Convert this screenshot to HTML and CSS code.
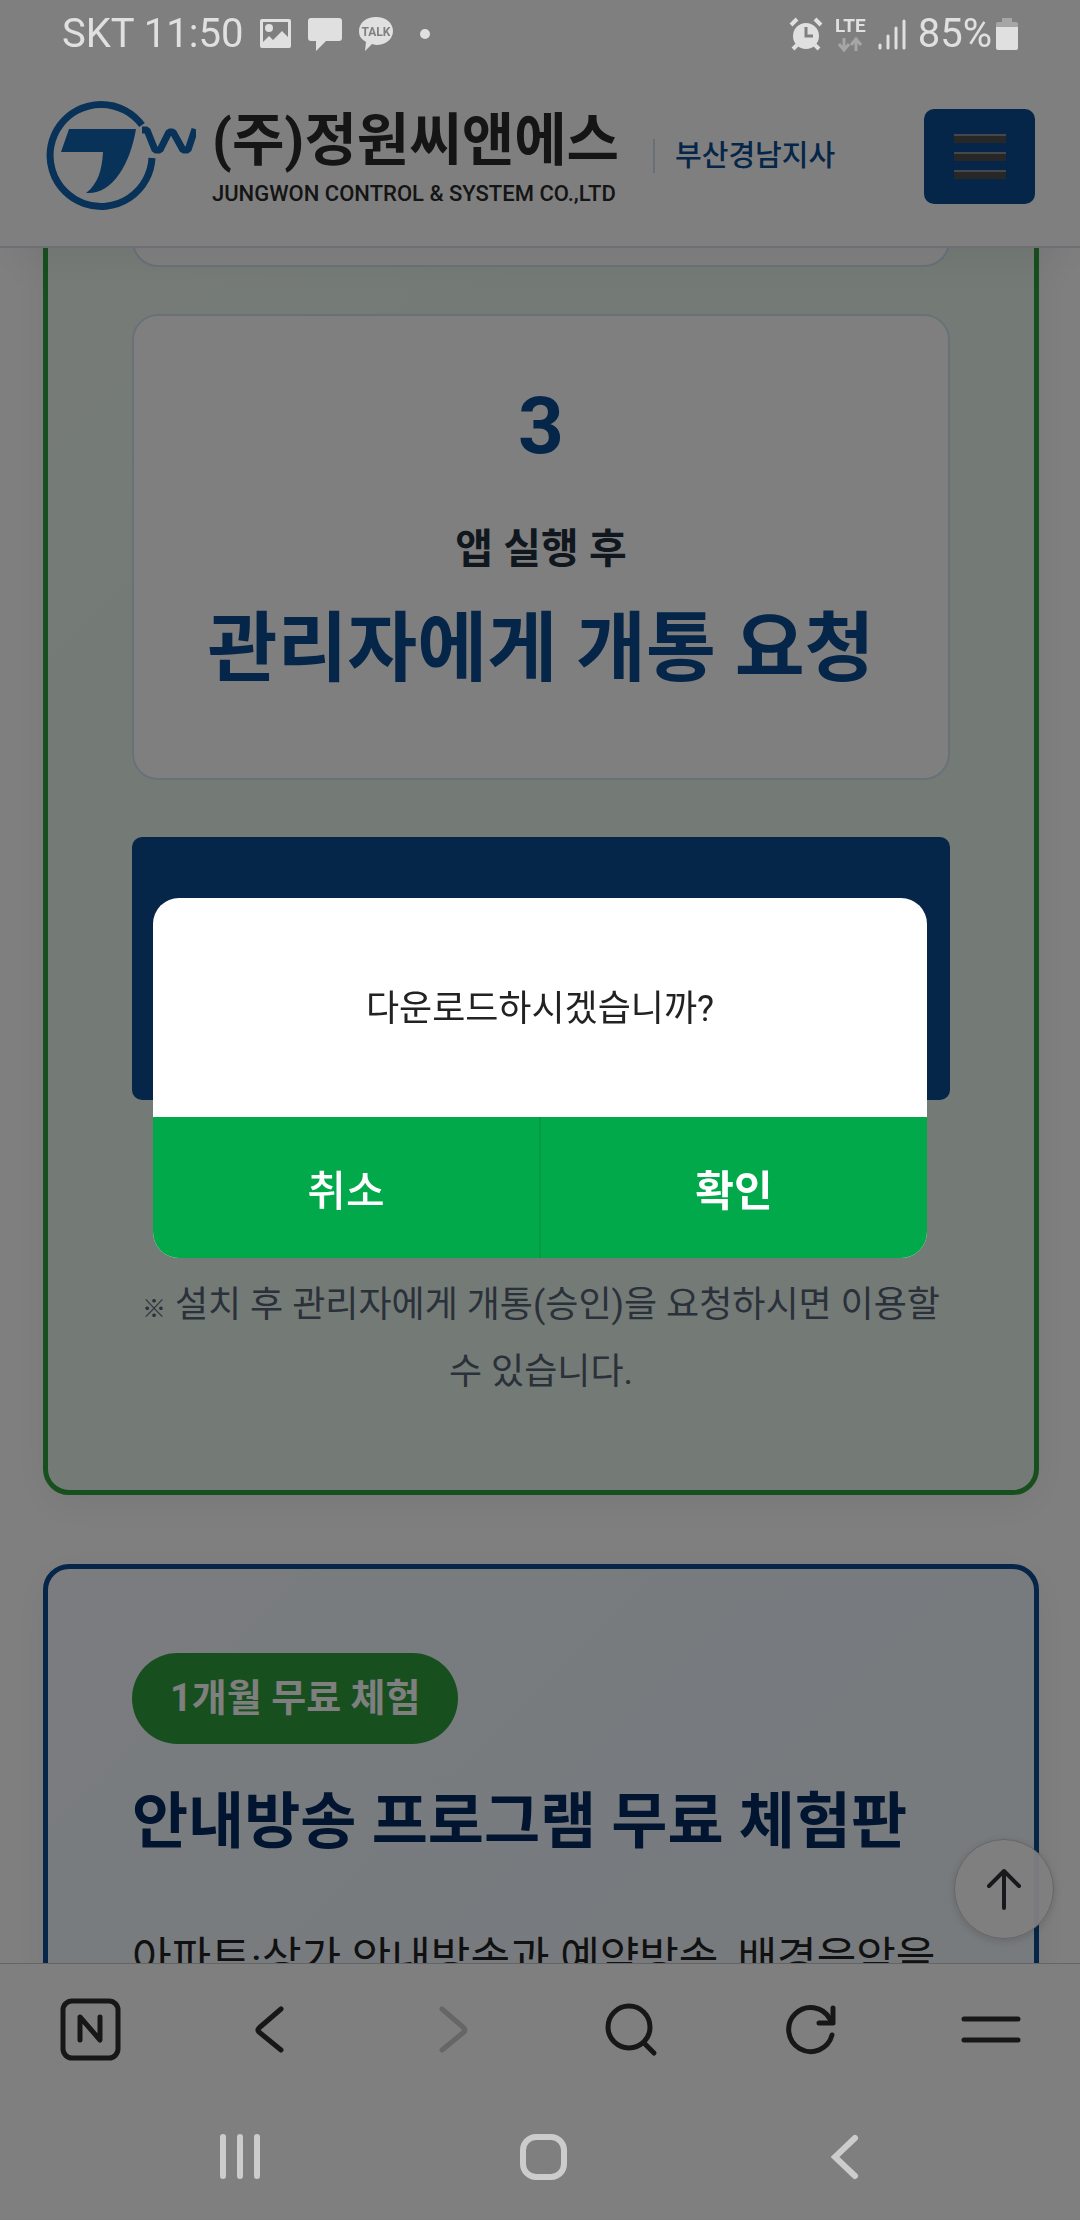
FILE: index.html
```html
<!DOCTYPE html>
<html lang="ko">
  <head>
    <meta charset="UTF-8" />
    <meta name="viewport" content="width=device-width, initial-scale=1.0" />
    <title>(주)정원씨앤에스 부산경남지사</title>
    <link rel="stylesheet" href="styles.css">
  </head>
  <body>
    <div class="screen">
      <div class="status-bar">
        <div class="status-left">
          <span class="status-text">SKT 11:50</span>
          <svg width="33" height="30" viewBox="0 0 33 30">
            <path fill-rule="evenodd" fill="#e0e0e0" d="M3 0h27a2 2 0 0 1 2 2v25a2 2 0 0 1-2 2H3a2 2 0 0 1-2-2V2a2 2 0 0 1 2-2zM4 3v20l6-6 4 4 9-9 6 6V3z" />
            <circle cx="10" cy="9" r="4" fill="#e0e0e0" />
          </svg>
          <svg width="34" height="34" viewBox="0 0 34 34">
            <path fill="#e0e0e0" d="M3 1h28a3 3 0 0 1 3 3v17a3 3 0 0 1-3 3H18L8 34V24H3a3 3 0 0 1-3-3V4a3 3 0 0 1 3-3z" />
          </svg>
          <svg width="36" height="36" viewBox="0 0 36 36">
            <path fill="#e0e0e0" d="M18 1c10 0 17 6 17 14s-7 14-17 14l-4-1-7 7 1-9c-5-3-7-6-7-11C1 7 8 1 18 1z" />
            <text x="18" y="20" text-anchor="middle" class="talk">TALK</text>
          </svg>
          <span class="status-dot"></span>
        </div>
        <div class="status-right">
          <svg width="34" height="34" viewBox="0 0 34 34">
            <circle cx="17" cy="19" r="13" fill="#e0e0e0" />
            <path d="M2 8l6-6M32 8l-6-6" stroke="#e0e0e0" stroke-width="4" />
            <path d="M8 28l-4 4M26 28l4 4" stroke="#e0e0e0" stroke-width="4" />
            <path d="M17 10v9h7" fill="none" stroke="#808080" stroke-width="3" />
          </svg>
          <div class="network">
            <span>LTE</span>
            <svg width="24" height="15" viewBox="0 0 24 15">
              <path d="M6 1v11M1 7l5 6 5-6M18 14V3M13 8l5-6 5 6" fill="none" stroke="#a6a6a6" stroke-width="3" />
            </svg>
          </div>
          <svg width="28" height="32" viewBox="0 0 28 32">
            <path d="M2 27v3M10 18v12M18 10v20M26 3v27" stroke="#e0e0e0" stroke-width="3" stroke-linecap="round" />
          </svg>
          <span class="status-text">85%</span>
          <svg width="22" height="34" viewBox="0 0 22 34">
            <path d="M6 1h10v4h4a2 2 0 0 1 2 2v3H0V7a2 2 0 0 1 2-2h4z" fill="#a6a6a6" />
            <path d="M0 10h22v21a2 2 0 0 1-2 2H2a2 2 0 0 1-2-2z" fill="#e0e0e0" />
          </svg>
        </div>
      </div>

      <header class="site-header">
        <a href="#" class="logo">
          <svg width="151" height="112" viewBox="0 0 151 112">
            <path d="M97 25A51 51 0 1 0 107 58" fill="none" stroke="#1065b0" stroke-width="7" />
            <path d="M24 29H91C85 65 67 95 41 93C53 84 57 70 58 52H16z" fill="#1065b0" />
            <path d="M97 30h5l8 20h5l9-18h4l10 18h5l7-21" fill="none" stroke="#1065b0" stroke-width="7" stroke-linejoin="bevel" />
          </svg>
          <span class="logo-text">
            <strong>(주)정원씨앤에스</strong>
            <small>JUNGWON CONTROL &amp; SYSTEM CO.,LTD</small>
          </span>
        </a>
        <span class="branch">부산경남지사</span>
        <button class="menu-button" aria-label="메뉴">
          <span></span>
          <span></span>
          <span></span>
        </button>
      </header>

      <main class="content">
        <section class="card card-green">
          <div class="step step-previous"></div>
          <div class="step">
            <div class="step-number">3</div>
            <p class="step-text">앱 실행 후</p>
            <p class="step-title">관리자에게 개통 요청</p>
          </div>
          <button class="download-button" aria-label="다운로드"></button>
          <p class="notice"><span class="mark">※</span> 설치 후 관리자에게 개통(승인)을 요청하시면 이용할 수 있습니다.</p>
        </section>

        <section class="card card-blue">
          <span class="badge">1개월 무료 체험</span>
          <h2>안내방송 프로그램 무료 체험판</h2>
          <p class="description">아파트·상가 안내방송과 예약방송, 배경음악을</p>
        </section>

        <button class="top-button" aria-label="맨 위로">
          <svg width="40" height="44" viewBox="0 0 40 44">
            <path d="M20 41V4M5 19L20 4l15 15" fill="none" stroke="#33333a" stroke-width="4" stroke-linecap="round" stroke-linejoin="round" />
          </svg>
        </button>
      </main>

      <nav class="browser-bar">
        <button aria-label="네이버 홈">
          <svg width="64" height="64" viewBox="0 0 64 64">
            <rect x="5" y="4" width="55" height="57" rx="9" />
            <path d="M22 43V20l20 23V20" />
          </svg>
        </button>
        <button aria-label="뒤로">
          <svg width="64" height="64" viewBox="0 0 64 64">
            <path d="M43 12L21 31q-2 2 0 4l22 18" />
          </svg>
        </button>
        <button aria-label="앞으로" disabled>
          <svg width="64" height="64" viewBox="0 0 64 64">
            <path d="M24 12l22 19q2 2 0 4L24 53" />
          </svg>
        </button>
        <button aria-label="검색">
          <svg width="64" height="64" viewBox="0 0 64 64">
            <circle cx="31" cy="30" r="21" />
            <path d="M46 46l10 10" />
          </svg>
        </button>
        <button aria-label="새로고침">
          <svg width="64" height="64" viewBox="0 0 64 64">
            <path d="M54 38A22 22 0 1 1 52 22" />
            <path d="M55 11v15H41" />
          </svg>
        </button>
        <button aria-label="더보기">
          <svg width="64" height="64" viewBox="0 0 64 64">
            <path d="M6 22h54M6 43h54" />
          </svg>
        </button>
      </nav>

      <nav class="system-bar">
        <button aria-label="최근 앱">
          <svg width="48" height="48" viewBox="0 0 48 48">
            <path d="M7 4v39M24 4v39M41 4v39" stroke-linecap="round" />
          </svg>
        </button>
        <button aria-label="홈">
          <svg width="48" height="48" viewBox="0 0 48 48">
            <rect x="4" y="4" width="41" height="40" rx="13" />
          </svg>
        </button>
        <button aria-label="뒤로 가기">
          <svg width="48" height="48" viewBox="0 0 48 48">
            <path d="M34 5L14 24l20 19" stroke-linecap="round" />
          </svg>
        </button>
      </nav>
    </div>

    <div class="overlay">
      <div class="dialog" role="dialog" aria-labelledby="dialogMessage">
        <p id="dialogMessage">다운로드하시겠습니까?</p>
        <div class="dialog-buttons">
          <button class="cancel">취소</button>
          <button class="confirm">확인</button>
        </div>
      </div>
    </div>
  </body>
</html>
```
FILE: styles.css
```css
* {
  box-sizing: border-box;
}
body {
  margin: 0;
  background-color: #fff;
  font-family: Roboto, "Noto Sans CJK KR", sans-serif;
  color: #222;
}
p,
h2 {
  margin: 0;
}
button {
  padding: 0;
  border: none;
  background: none;
  font-family: inherit;
  cursor: pointer;
}
svg {
  display: block;
  flex-shrink: 0;
}
.screen {
  display: flex;
  flex-direction: column;
  height: 100vh;
  overflow: hidden;
}

/* status bar, drawn above the overlay */
.status-bar {
  position: relative;
  z-index: 20;
  display: flex;
  justify-content: space-between;
  padding: 2px 62px 0;
  height: 66px;
  color: #e0e0e0;
}
.status-left,
.status-right {
  display: flex;
  align-items: center;
}
.status-left {
  gap: 16px;
}
.status-right {
  gap: 12px;
}
.status-right .status-text {
  margin-right: -8px;
}
.status-text {
  font-size: 40px;
  line-height: 64px;
}
.talk {
  font-size: 12px;
  font-weight: bold;
  fill: #808080;
}
.status-dot {
  width: 10px;
  height: 10px;
  margin-left: 10px;
  border-radius: 50%;
  background-color: #e0e0e0;
}
.network {
  display: flex;
  flex-direction: column;
  align-items: center;
  gap: 2px;
  font-size: 19px;
  font-weight: bold;
  line-height: 18px;
}

/* header */
.site-header {
  position: relative;
  z-index: 2;
  display: flex;
  align-items: center;
  flex-shrink: 0;
  height: 182px;
  padding: 0 45px;
  background-color: #fff;
  border-bottom: 2px solid #dbe3ec;
  box-shadow: 0 20px 40px -10px rgba(0, 0, 0, 0.06);
}
.logo {
  display: flex;
  align-items: center;
  gap: 16px;
  color: #2a2a2a;
  text-decoration: none;
}
.logo-text {
  display: flex;
  flex-direction: column;
  padding-top: 4px;
}
.logo-text strong {
  font-size: 57px;
  line-height: 72px;
}
.logo-text small {
  font-size: 22px;
  font-weight: 500;
  line-height: 34px;
}
.branch {
  margin-left: 34px;
  padding-left: 20px;
  border-left: 2px solid #d5dfea;
  color: #0b4c91;
  font-size: 29px;
  font-weight: 500;
  line-height: 34px;
}
.menu-button {
  display: flex;
  flex-direction: column;
  align-items: center;
  justify-content: center;
  gap: 9px;
  width: 111px;
  height: 95px;
  margin-left: auto;
  border-radius: 10px;
  background-color: #0b4c91;
}
.menu-button span {
  width: 52px;
  height: 9px;
  border-top: 2px solid #8a8f94;
  background-color: #4e4e4e;
}

/* content */
.content {
  position: relative;
  flex: 1;
  min-height: 0;
  padding: 0 41px 0 43px;
  overflow: hidden;
}
.card {
  padding: 84px;
  border: 5px solid #2e9e3f;
  border-radius: 26px;
  box-shadow: 0 10px 40px rgba(0, 0, 0, 0.06);
}
.card-green {
  margin-top: -218px;
  background: linear-gradient(135deg, #f0f8f2, #e8f5ec 30%, #e8f5ec);
}
.card-blue {
  margin-top: 69px;
  border-color: #0b4c91;
  background: linear-gradient(135deg, #f8f8ff, #f0f8ff 30%, #eef6fc);
}
.step {
  padding: 70px 20px 74px;
  border: 2px solid #d3e1f1;
  border-radius: 26px;
  background-color: #fff;
  text-align: center;
}
.step-previous {
  margin-bottom: 47px;
}
.step-number {
  color: #0b4c91;
  font-size: 80px;
  font-weight: bold;
  line-height: 80px;
}
.step-text {
  margin-top: 50px;
  color: #222f3c;
  font-size: 41px;
  font-weight: bold;
  line-height: 66px;
}
.step-title {
  margin-top: 12px;
  color: #0b4c91;
  font-size: 76px;
  font-weight: bold;
  line-height: 110px;
}
.download-button {
  display: block;
  width: 100%;
  height: 263px;
  margin-top: 57px;
  border-radius: 10px;
  background-color: #0b4c91;
}
.notice {
  margin-top: 172px;
  color: #556275;
  font-size: 36px;
  line-height: 67px;
  text-align: center;
}
.notice .mark {
  font-size: 24px;
  font-weight: bold;
  line-height: 24px;
}
.badge {
  display: inline-block;
  padding: 0 38px;
  border-radius: 46px;
  background-color: #2e9e3f;
  color: #fff;
  font-size: 38px;
  font-weight: bold;
  line-height: 91px;
}
.card-blue h2 {
  margin-top: 30px;
  color: #022a60;
  font-size: 61px;
  font-weight: bold;
  line-height: 96px;
}
.description {
  margin-top: 50px;
  font-size: 43px;
  line-height: 76px;
  white-space: nowrap;
}
.top-button {
  position: absolute;
  right: 26px;
  bottom: 24px;
  display: flex;
  align-items: center;
  justify-content: center;
  width: 100px;
  height: 100px;
  border: 1px solid #c8c8cc;
  border-radius: 50%;
  background-color: rgba(255, 255, 255, 0.95);
  box-shadow: 0 2px 8px rgba(0, 0, 0, 0.15);
}

/* bottom bars */
.browser-bar {
  display: flex;
  align-items: center;
  justify-content: space-between;
  flex-shrink: 0;
  height: 131px;
  padding: 0 58px;
  border-top: 1px solid #c8c8c8;
}
.browser-bar svg {
  fill: none;
  stroke: #2e2e2e;
  stroke-width: 5;
  stroke-linecap: round;
  stroke-linejoin: round;
}
.browser-bar button:disabled svg {
  stroke: #cccccc;
}
.system-bar {
  position: relative;
  z-index: 20;
  display: flex;
  align-items: center;
  justify-content: space-between;
  flex-shrink: 0;
  height: 126px;
  padding: 0 211px 0 216px;
}
.system-bar svg {
  fill: none;
  stroke: #cccccc;
  stroke-width: 6;
}

/* dialog */
.overlay {
  position: fixed;
  inset: 0;
  z-index: 10;
  display: flex;
  align-items: center;
  justify-content: center;
  padding: 0 153px 64px;
  background-color: rgba(0, 0, 0, 0.5);
}
.dialog {
  width: 100%;
  border-radius: 26px;
  background-color: #fff;
  overflow: hidden;
}
.dialog p {
  padding: 82px 20px 78px;
  font-size: 36px;
  line-height: 59px;
  text-align: center;
}
.dialog-buttons {
  display: flex;
  background-color: #02a94b;
}
.dialog-buttons button {
  flex: 1;
  height: 141px;
  color: #fff;
  font-size: 42px;
}
.dialog-buttons .cancel {
  border-right: 2px solid #059a46;
  font-weight: 500;
}
.dialog-buttons .confirm {
  font-weight: bold;
}
```
